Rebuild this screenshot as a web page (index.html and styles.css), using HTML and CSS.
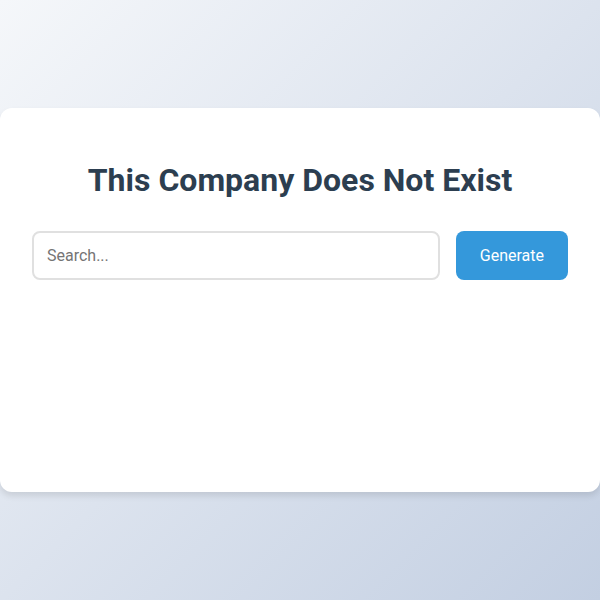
FILE: index.html
```html
<!DOCTYPE html>
<html>
<head>
<meta charset="utf-8">
<link rel="stylesheet" href="styles.css">
</head>
<body>
<div class="card">
  <h1 class="title">This Company Does Not Exist</h1>
  <div class="search-row">
    <input class="search-input" type="text" placeholder="Search...">
    <button class="generate-btn">Generate</button>
  </div>
</div>
</body>
</html>
```
FILE: styles.css
```css
html, body {
  margin: 0;
  padding: 0;
}
body {
  min-height: 100vh;
  display: flex;
  align-items: center;
  justify-content: center;
  background: linear-gradient(135deg, #f5f7fa 0%, #c3cfe2 100%);
  font-family: Roboto, "Liberation Sans", sans-serif;
}
.card {
  width: 100%;
  box-sizing: border-box;
  height: 384px;
  background: #ffffff;
  border-radius: 12px;
  box-shadow: 0 4px 6px rgba(0, 0, 0, 0.1);
  padding: 32px;
}
.title {
  margin: 21px 0 32px;
  text-align: center;
  font-size: 32px;
  font-weight: 700;
  color: #2c3e50;
  line-height: 38px;
}
.search-row {
  display: flex;
  gap: 16px;
}
.search-input {
  flex: 1;
  font-family: inherit;
  font-size: 16px;
  line-height: 21px;
  padding: 12px 13px;
  border: 2px solid #e0e0e0;
  border-radius: 8px;
  color: #333;
  outline: none;
}
.search-input::placeholder {
  color: #757575;
}
.generate-btn {
  font-family: inherit;
  font-size: 16px;
  padding: 12px 24px;
  border: none;
  border-radius: 8px;
  background: #3498db;
  color: #ffffff;
}
```
